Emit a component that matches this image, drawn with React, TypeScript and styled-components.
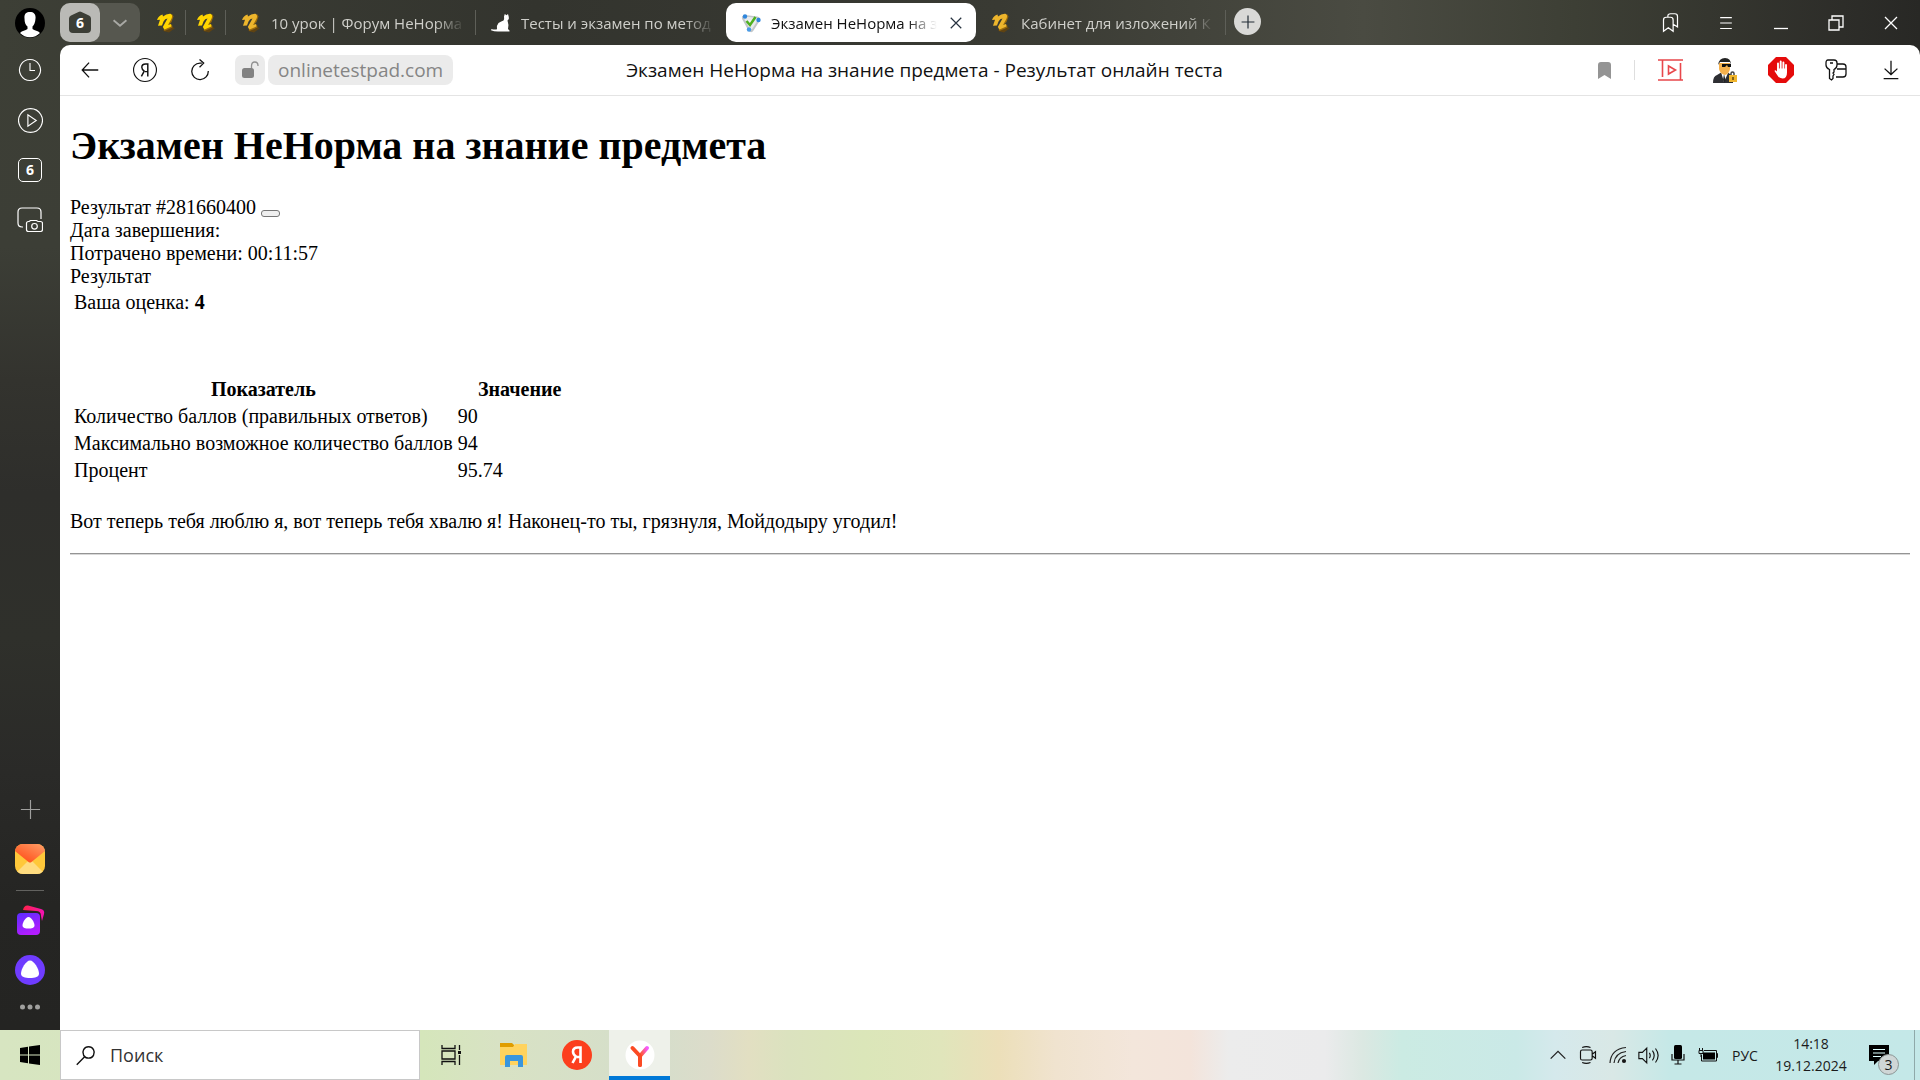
import React from "react";
import styled, { createGlobalStyle, css } from "styled-components";

const ui = `"Open Sans", "Noto Sans", sans-serif`;
const serif = `"Liberation Serif", "Times New Roman", serif`;

const GlobalStyle = createGlobalStyle`
  *, *::before, *::after { box-sizing: border-box; }
  body { margin: 0; background: #fff; font-family: ${ui}; }
  button { padding: 0; border: 0; background: none; color: inherit; font: inherit; }
  svg { display: block; flex: none; }
`;

const Desktop = styled.div`
  display: grid;
  grid-template-rows: minmax(0, 1fr) 50px;
  height: 100vh;
`;

const Browser = styled.div`
  display: grid;
  grid-template-columns: 60px minmax(0, 1fr);
  grid-template-rows: 45px minmax(0, 1fr);
  background:
    linear-gradient(90deg, #3d3f36 0, #33342e 28%, #393a33 52%, #4a4b42 71%, #3d3f35 82%, #2d2d29 96%, #282825 100%) top / 100% 60px no-repeat,
    linear-gradient(180deg, #3d3f36 0, #3c3e36 24%, #33332e 37%, #2e2e2b 48%, #2f302b 62%, #2a2a28 75%, #252523 88%, #242422 100%);
`;

const Corner = styled.div`
  display: flex;
  align-items: center;
  justify-content: center;
`;

const TabStrip = styled.header`
  display: flex;
  align-items: stretch;
  min-width: 0;
`;

const TabGroup = styled.div`
  display: flex;
  width: 80px;
  margin: 3px 6px 3px 0;
  border-radius: 10px;
  background: #56574f;
`;

const GroupButton = styled.button<{ $light?: boolean }>`
  display: flex;
  flex: 1;
  align-items: center;
  justify-content: center;
  border-radius: 10px;
  background: ${(p) => (p.$light ? "#babab6" : "transparent")};
`;

const HomeBadge = styled.span`
  display: grid;
  place-items: center;
  color: #fff;
  font-size: 14px;
  line-height: 24px;
  font-weight: 700;
  > * { grid-area: 1 / 1; }
`;

const Tab = styled.button<{ $active?: boolean; $pinned?: boolean; $rule?: boolean }>`
  position: relative;
  display: flex;
  align-items: center;
  flex: 0 1 ${(p) => (p.$pinned ? 40 : 250)}px;
  min-width: 0;
  gap: 10px;
  padding: ${(p) => (p.$pinned ? "0 10px" : "0 11px 0 15px")};
  color: ${(p) => (p.$active ? "#111" : "#cfcfca")};
  font-size: 15px;
  line-height: 24px;
  ${(p) => p.$active && css`
    margin: 3px 0;
    border-radius: 10px;
    background: #fff;
  `}
  ${(p) => p.$rule && css`
    &::after {
      content: "";
      position: absolute;
      right: 0;
      top: 10px;
      bottom: 10px;
      width: 1px;
      background: #5e5f58;
    }
  `}
`;

const TabTitle = styled.span`
  flex: 1;
  min-width: 0;
  overflow: hidden;
  text-align: left;
  white-space: nowrap;
  mask-image: linear-gradient(90deg, #000 calc(100% - 30px), transparent);
`;

const NewTab = styled.button`
  display: flex;
  align-items: center;
  justify-content: center;
  align-self: center;
  width: 27px;
  height: 27px;
  margin: 0 auto 2px 8px;
  border-radius: 50%;
  background: #d9d9d7;
`;

const Cluster = styled.div`
  display: flex;
  padding-right: 2px;
`;

const IconButton = styled.button<{ $narrow?: boolean }>`
  display: flex;
  align-items: center;
  justify-content: center;
  width: ${(p) => (p.$narrow ? 47 : 55)}px;
`;

const Sidebar = styled.nav`
  display: flex;
  flex-direction: column;
  align-items: center;
`;

const SideButton = styled.button<{ $push?: boolean }>`
  display: flex;
  align-items: center;
  justify-content: center;
  width: 60px;
  height: 50px;
  margin-top: ${(p) => (p.$push ? "auto" : "0")};
`;

const MoreButton = styled(SideButton)`
  height: 24px;
  margin-bottom: 11px;
`;

const Counter = styled.span`
  width: 24px;
  border: 1px solid #fff;
  border-radius: 5px;
  color: #fff;
  font-size: 14px;
  line-height: 22px;
  font-weight: 700;
`;

const SideRule = styled.hr`
  width: 28px;
  height: 1px;
  margin: 6px 0 4px;
  border: 0;
  background: #62625f;
`;

const Panel = styled.div`
  display: flex;
  flex-direction: column;
  min-width: 0;
  min-height: 0;
  border-radius: 10px 10px 0 0;
  background: #fff;
`;

const Toolbar = styled.div`
  display: flex;
  height: 51px;
  padding-left: 2px;
  border-bottom: 1px solid #e4e4e4;
`;

const LockButton = styled.button`
  display: flex;
  align-items: center;
  justify-content: center;
  align-self: center;
  width: 30px;
  height: 30px;
  margin: 0 3px 0 8px;
  border-radius: 7px;
  background: #ebebeb;
`;

const Omnibox = styled.div`
  display: grid;
  grid-template-columns: minmax(0, 1fr) auto minmax(0, 1fr);
  align-items: center;
  flex: 1;
  min-width: 0;
`;

const Host = styled.a`
  justify-self: start;
  padding: 0 10px;
  border-radius: 8px;
  background: #ebebeb;
  color: #858585;
  font-size: 19px;
  line-height: 30px;
  text-decoration: none;
`;

const PageTitle = styled.span`
  overflow: hidden;
  color: #111;
  font-size: 19px;
  line-height: 30px;
  white-space: nowrap;
`;

const ToolRule = styled.span`
  align-self: center;
  width: 1px;
  height: 20px;
  margin: 0 8px 0 6px;
  background: #dedede;
`;

const Page = styled.main`
  flex: 1;
  min-height: 0;
  overflow: hidden;
  padding: 0 10px;
  color: #000;
  font-family: ${serif};
  font-size: 20px;
  line-height: 23px;
`;

const Heading = styled.h1`
  margin: 27px 0;
  font-size: 40px;
  line-height: 46px;
`;

const EmptyButton = styled.button`
  width: 19px;
  height: 7px;
  border: 1px solid #767676;
  border-radius: 3px;
  background: #efefef;
  vertical-align: -2px;
`;

const Grid = styled.table`
  border-spacing: 3px 2px;
  td, th { padding: 1px; }
`;

const Scores = styled(Grid)`
  margin: 58px 0 25px;
  th:last-child { width: 126px; }
`;

const Rule = styled.hr`
  height: 2px;
  margin: 20px 0 0;
  border: 0;
  border-top: 1px solid #949494;
  border-bottom: 1px solid #d8d8d8;
`;

const Taskbar = styled.footer`
  display: flex;
  color: #1b1b1b;
  background: linear-gradient(90deg,
    #d7e5c1 0, #d5e6bb 22%, #d8e2c4 26%, #d5decb 34%, #dcdcca 37%, #e2dfc2 39%,
    #dbe2bf 41%, #dbe6b9 45%, #e0e5bb 49%, #ecdfb9 52%, #f0e3cf 55%, #f3e6db 59%,
    #f3e4db 62%, #ececec 64%, #ebebec 69%, #dbe8e2 71%, #cbebe3 73%, #cae9e7 79%,
    #d5e9ec 81%, #d9e8e6 84%, #c5e8e7 87%, #c4e8e8 100%);
`;

const TaskButton = styled.button<{ $active?: boolean; $wide?: boolean }>`
  display: flex;
  align-items: center;
  justify-content: center;
  width: ${(p) => (p.$wide ? 60 : 61)}px;
  margin-right: ${(p) => (p.$wide ? 0 : 2)}px;
  border-bottom: ${(p) => (p.$active ? "4px solid #0078d7" : "0")};
  background: ${(p) => (p.$active ? "#eef1ea" : "transparent")};
  ${(p) => p.$active && "padding-top: 4px;"}
`;

const Search = styled.label`
  display: flex;
  align-items: center;
  gap: 14px;
  width: 360px;
  padding: 0 14px;
  border: 1px solid #c8c8c8;
  background: #fff;
`;

const SearchInput = styled.input`
  flex: 1;
  min-width: 0;
  padding: 0;
  border: 0;
  outline: 0;
  background: none;
  color: #222;
  font: 18px/30px ${ui};
  &::placeholder { color: #333; opacity: 1; }
`;

const Tray = styled.div`
  display: flex;
  align-items: center;
  margin-left: auto;
`;

const TrayButton = styled.button`
  display: flex;
  align-items: center;
  justify-content: center;
  width: 30px;
  height: 50px;
`;

const Language = styled.button`
  width: 44px;
  font-size: 14px;
`;

const Clock = styled.time`
  width: 88px;
  font-size: 14px;
  line-height: 22px;
  text-align: center;
`;

const NoticeButton = styled.button`
  position: relative;
  width: 59px;
  height: 50px;
  padding-left: 14px;
`;

const NoticeCount = styled.span`
  position: absolute;
  left: 23px;
  top: 24px;
  width: 21px;
  border: 1px solid #8c9595;
  border-radius: 50%;
  background: #cfd6d6;
  font-size: 14px;
  line-height: 19px;
  text-align: center;
`;

const ShowDesktop = styled.button`
  align-self: stretch;
  width: 6px;
  border-left: 1px solid #8fa9a9;
`;

const Line = ({ size = 24, d, color = "#fff", w = 1.2 }: { size?: number; d: string; color?: string; w?: number }) => (
  <svg width={size} height={size} viewBox="0 0 24 24" fill="none" stroke={color} strokeWidth={w} aria-hidden="true">
    <path d={d} />
  </svg>
);

const NLogo = ({ muted }: { muted?: boolean }) => (
  <svg width="20" height="20" viewBox="0 0 20 20" aria-hidden="true">
    <path d="M7 18l5-5 7 2-6 4.500z" fill="#5f4312" />
    <path d="M16 1l1.500 2.500L15.500 9l-3 3.500 3.500-1 .5 3-8 3.500-1-2.500L13 5z" fill="#9a6a0c" />
    <path d="M1 7Q2.500 2.500 6.500 1.500L7 3.500Q10.500 .5 14.500 .8q2.500 1 1 5L12 12l3-1 .3 2.500L8.500 16.500 6.800 14 11.500 5.500Q9 5.500 7.500 8.500L6 12.500 2 12.800 4 6.800z" fill={muted ? "#edb52c" : "#ffd500"} />
  </svg>
);

const Cat = () => (
  <svg width="20" height="20" viewBox="0 0 20 20" fill="#fff" aria-hidden="true">
    <path d="M13 3.500l.8-2.500 1.700 1.200L17 1l.8 3q.7 2-1.300 3.500 1.500 4 .5 8.500l1.500 1.500v1H8.500q-5 .3-8.500-1.200l.5-1.300q3 1 5.500.2-1-3.200 1.500-6.200Q9.500 8.500 12.500 7.500q1-1 .5-4z" />
  </svg>
);

const TestPad = () => (
  <svg width="20" height="20" viewBox="0 0 20 20" aria-hidden="true">
    <path d="M4 5l12 1.500-6 9.500z" fill="#f2f4f5" stroke="#c3c7ca" strokeWidth="6" strokeLinejoin="round" />
    <path d="M4.500 5l11 1.500L10 15z" fill="#f2f4f5" stroke="#e8eaec" strokeWidth="3" strokeLinejoin="round" />
    <circle cx="4" cy="3.500" r="2.200" fill="#2f86dc" />
    <circle cx="17.500" cy="7" r="2.200" fill="#2f86dc" />
    <circle cx="8" cy="16.500" r="2.200" fill="#4a9be6" />
    <path d="M5.500 8l3.500 4 5.500-8" fill="none" stroke="#4eb01f" strokeWidth="2.500" />
  </svg>
);

const Avatar = () => (
  <svg width="30" height="30" viewBox="0 0 30 30" aria-hidden="true">
    <circle cx="15" cy="15" r="15" fill="#000" />
    <path d="M15 4c4 0 6 2.500 5.500 6.500-.2 4-1.500 6.500-3 8v2.500c2 1.500 5.500 1.500 7.500 4a14 14 0 0 1-20 0c2-2.500 5.500-2.500 7.500-4V18.500c-2-1.500-3-4-3-8C9 6 11 4 15 4z" fill="#fff" />
  </svg>
);

const Alice = () => (
  <svg width="30" height="30" viewBox="0 0 30 30" aria-hidden="true">
    <circle cx="15" cy="15" r="15" fill="#6f3cff" />
    <path d="M15 5.500c4 0 9 8.500 9 13 0 3.500-4 4.500-9 4.500s-9-1-9-4.500c0-4.500 5-13 9-13z" fill="#fff" />
  </svg>
);

const AliceCards = () => (
  <svg width="30" height="30" viewBox="0 0 30 30" aria-hidden="true">
    <defs>
      <linearGradient id="card" x2="0.400" y2="1"><stop stopColor="#5a2dff" /><stop offset="1" stopColor="#b31dff" /></linearGradient>
      <linearGradient id="cardBack"><stop stopColor="#ff2347" /><stop offset="1" stopColor="#f312b4" /></linearGradient>
    </defs>
    <path d="M8 5q1-5 5-4.500l13 3.500q4 1 3 5l-2 7-1-5q0-5-5-5z" fill="url(#cardBack)" />
    <rect x="2" y="8" width="23" height="22" rx="4" fill="url(#card)" />
    <path d="M13.500 12c3 0 6 5.500 6 8.500 0 2.500-3 3-6 3s-6-.5-6-3c0-3 3-8.500 6-8.500z" fill="#fff" />
  </svg>
);

const Mail = () => (
  <svg width="30" height="30" viewBox="0 0 30 30" aria-hidden="true">
    <defs>
      <linearGradient id="flap" x1="0.200" y1="1" x2="1" y2="0"><stop stopColor="#ff4b16" /><stop offset="1" stopColor="#ff9f68" /></linearGradient>
      <clipPath id="mailClip"><rect width="30" height="30" rx="8" /></clipPath>
    </defs>
    <g clipPath="url(#mailClip)">
      <rect width="30" height="30" fill="#ffc83a" />
      <path d="M0 30L15 15l15 15z" fill="#ffdc80" />
      <path d="M0 0h30v7L16.500 18q-1.500 1.200-3 0L0 7z" fill="url(#flap)" />
    </g>
  </svg>
);

const Incognito = () => (
  <svg width="25" height="25" viewBox="0 0 25 25" aria-hidden="true">
    <path d="M0 25q0-7 4-8l5-3h5l6 4v7z" fill="#2e2f33" />
    <path d="M8 14l3 10 4-9z" fill="#fff" />
    <path d="M11 16l-1 6 1.500 3 1-3z" fill="#222" />
    <path d="M6 5h11v6q-1 5-5 6-5-1-6-6z" fill="#f5b14d" />
    <path d="M5 7q1-7 7-7 6 0 6 7l-1-3H7z" fill="#222" />
    <path d="M9 6h9v3h-3l-1-2-2 2H9z" fill="#111" />
    <path d="M18 18v-2.500q0-1.500 1.500-1.500t1.500 1.500V18" fill="none" stroke="#444" strokeWidth="1.500" />
    <rect x="16" y="17" width="8" height="7" fill="#f0b52c" />
    <path d="M20 19v3" stroke="#60440a" strokeWidth="1.500" />
  </svg>
);

const StopHand = () => (
  <svg width="26" height="26" viewBox="0 0 26 26" aria-hidden="true">
    <path d="M8 0h10l8 8v10l-8 8H8l-8-8V8z" fill="#e50b0b" />
    <path d="M10 13V6.500M12.700 12V4.500M15.400 12V5.500M18 14V8" stroke="#fff" strokeWidth="1.900" strokeLinecap="round" />
    <path d="M9 11.500h10v4q0 6-4.500 6-3.500 0-5-3L6.500 14q.5-1.500 2.500.5z" fill="#fff" />
  </svg>
);

const Folder = () => (
  <svg width="28" height="24" viewBox="0 0 28 24" aria-hidden="true">
    <path d="M0 0h12l2 2v5H0z" fill="#e09d00" />
    <path d="M0 4h13l2-3h12v21H0z" fill="#ffd35e" />
    <path d="M5 24V14q0-2 2-2h14q2 0 2 2v10h-5v-6h-8v6z" fill="#3a96dd" />
  </svg>
);

const YaMark = ({ size, fill, ink, ring }: { size: number; fill: string; ink: string; ring?: string }) => (
  <svg width={size} height={size} viewBox="0 0 30 30" aria-hidden="true">
    <circle cx="15" cy="15" r="14.300" fill={fill} stroke={ring || fill} strokeWidth="1.400" />
    <path d="M18.500 23V7.500h-2.800c-3 0-4.700 1.500-4.700 4.200 0 2.200 1 3.300 3 4.800L10.500 23M18.500 17H15" fill="none" stroke={ink} strokeWidth={ring ? 1.800 : 2.600} />
  </svg>
);

const YBrowser = () => (
  <svg width="30" height="30" viewBox="0 0 30 30" aria-hidden="true">
    <defs>
      <linearGradient id="arm" x1="0" y1="1" x2="1" y2="0"><stop stopColor="#ff4a2a" /><stop offset="0.500" stopColor="#ff5a4d" /><stop offset="1" stopColor="#f45cff" /></linearGradient>
    </defs>
    <circle cx="15" cy="15" r="14.500" fill="#fff" />
    <path d="M15 25v-9l7-8" fill="none" stroke="url(#arm)" strokeWidth="4" strokeLinecap="round" strokeLinejoin="round" />
    <path d="M7.500 8l7.500 8v9" fill="none" stroke="#fb4a24" strokeWidth="4" strokeLinecap="round" strokeLinejoin="round" />
  </svg>
);

const scores = [
  ["Количество баллов (правильных ответов)", "90"],
  ["Максимально возможное количество баллов", "94"],
  ["Процент", "95.74"],
];

export default function App() {
  return (
    <Desktop>
      <GlobalStyle />
      <Browser>
        <Corner><Avatar /></Corner>
        <TabStrip>
          <TabGroup>
            <GroupButton $light aria-label="Группа вкладок">
              <HomeBadge>
                <svg width="22" height="23" viewBox="0 0 22 23" aria-hidden="true">
                  <path d="M9.500 1Q11 0 12.500 1L20 4.500q2 1 2 3V18q0 4-4 4H4q-4 0-4-4V7.500q0-2 2-3z" fill="#3c3e36" />
                </svg>
                <span>6</span>
              </HomeBadge>
            </GroupButton>
            <GroupButton aria-label="Список вкладок"><Line d="M5 9l7 6 7-6" size={22} color="#a9a9a5" w={2} /></GroupButton>
          </TabGroup>
          <Tab $pinned $rule aria-label="НеНорма"><NLogo /></Tab>
          <Tab $pinned $rule aria-label="НеНорма"><NLogo /></Tab>
          <Tab $rule><NLogo muted /><TabTitle>10 урок | Форум НеНорма</TabTitle></Tab>
          <Tab><Cat /><TabTitle>Тесты и экзамен по метод</TabTitle></Tab>
          <Tab $active>
            <TestPad /><TabTitle>Экзамен НеНорма на з</TabTitle>
            <Line d="M5 5l14 14M19 5L5 19" size={18} color="#26323f" w={1.600} />
          </Tab>
          <Tab $rule><NLogo muted /><TabTitle>Кабинет для изложений К</TabTitle></Tab>
          <NewTab aria-label="Новая вкладка"><Line d="M12 5v14M5 12h14" size={22} color="#222c36" w={1.300} /></NewTab>
          <Cluster>
            <IconButton aria-label="Закладки"><Line d="M4 22V9q0-3 3-3h5q3 0 3 3v13l-5.500-4zM9 6V4.500Q9 2 12 2h5q3 0 3 3v12l-5-3" size={21} w={1.400} /></IconButton>
            <IconButton aria-label="Меню"><Line d="M5 5.500h14M5 12h14M5 18.500h14" size={20} w={1.300} /></IconButton>
            <IconButton aria-label="Свернуть"><Line d="M5 17.500h14" w={1.300} /></IconButton>
            <IconButton aria-label="Восстановить"><Line d="M5 9h10v10H5zM8 9V5h11v11h-4" w={1.300} /></IconButton>
            <IconButton aria-label="Закрыть"><Line d="M6 6l12 12M18 6L6 18" w={1.300} /></IconButton>
          </Cluster>
        </TabStrip>
        <Sidebar aria-label="Боковая панель">
          <SideButton aria-label="История"><Line d="M12 1.500a10.500 10.500 0 1 0 .01 0M12 5v7.500h5" size={24} w={1.100} /></SideButton>
          <SideButton aria-label="Плеер"><Line d="M12 .6a11.400 11.400 0 1 0 .01 0M9.500 6.500v11l8-5.500z" size={25} w={1.100} /></SideButton>
          <SideButton aria-label="Вкладки"><Counter>6</Counter></SideButton>
          <SideButton aria-label="Скриншот">
            <svg width="26" height="26" viewBox="0 0 26 26" fill="none" stroke="#fff" strokeWidth="1.200" aria-hidden="true">
              <path d="M6 20H5q-4 0-4-4V5q0-4 4-4h15q4 0 4 4v7" />
              <path d="M12 14.500l1.500-1h6l1.500 1h2.500q2 0 2 2v6q0 2-2 2h-12q-2 0-2-2v-6q0-2 2-2z" />
              <circle cx="17.500" cy="19.300" r="2.800" />
            </svg>
          </SideButton>
          <SideButton $push aria-label="Добавить"><Line d="M12 2v20M2 12h20" size={23} color="#a0a09e" w={1.200} /></SideButton>
          <SideButton aria-label="Почта"><Mail /></SideButton>
          <SideRule />
          <SideButton aria-label="Нейросети"><AliceCards /></SideButton>
          <SideButton aria-label="Алиса"><Alice /></SideButton>
          <MoreButton aria-label="Ещё">
            <svg width="20" height="6" viewBox="0 0 20 6" fill="#a0a09e" aria-hidden="true">
              <circle cx="2.500" cy="3" r="2.500" /><circle cx="10" cy="3" r="2.500" /><circle cx="17.500" cy="3" r="2.500" />
            </svg>
          </MoreButton>
        </Sidebar>
        <Panel>
          <Toolbar>
            <IconButton aria-label="Назад"><Line d="M21 12H3.500M11 4l-7.500 8 7.500 8" size={22} color="#111" w={1.400} /></IconButton>
            <IconButton aria-label="Яндекс"><YaMark size={24} fill="#fff" ink="#111" ring="#111" /></IconButton>
            <IconButton aria-label="Обновить"><Line d="M14 4.500h-2a9 9 0 1 0 9 8.500M11.500 0.500l4.500 4-4.500 4.500" size={22} color="#111" w={1.400} /></IconButton>
            <LockButton aria-label="Соединение">
              <svg width="18" height="18" viewBox="0 0 18 18" aria-hidden="true">
                <rect x="1" y="7" width="12" height="10" rx="2.500" fill="#828282" />
                <path d="M10.500 7V5q0-4 3.300-4T17 5" fill="none" stroke="#909090" strokeWidth="1.300" />
              </svg>
            </LockButton>
            <Omnibox>
              <Host href="#">onlinetestpad.com</Host>
              <PageTitle>Экзамен НеНорма на знание предмета - Результат онлайн теста</PageTitle>
            </Omnibox>
            <IconButton $narrow aria-label="В закладки">
              <svg width="13" height="17" viewBox="0 0 13 17" aria-hidden="true"><path d="M0 17V3q0-3 3-3h7q3 0 3 3v14l-6.500-4z" fill="#949494" /></svg>
            </IconButton>
            <ToolRule />
            <Cluster>
              <IconButton aria-label="Видео">
                <svg width="26" height="22" viewBox="0 0 26 22" fill="none" stroke="#e8474b" strokeWidth="1.600" aria-hidden="true">
                  <path d="M0 1h25M0 21h25M4.500 1v17M22.500 4v17M10.500 7v8l7-4z" />
                </svg>
              </IconButton>
              <IconButton aria-label="Инкогнито"><Incognito /></IconButton>
              <IconButton aria-label="Блокировщик"><StopHand /></IconButton>
              <IconButton aria-label="Пароли">
                <svg width="22" height="22" viewBox="0 0 22 22" fill="none" stroke="#111" strokeWidth="1.300" aria-hidden="true">
                  <path d="M3 1h6q3 0 3 3v2q0 3-3 4.500V13l-1 1 1 1.500-1 1.500v2.500L6.500 21 4.500 19.500V10.500Q1 9 1 6V4q0-3 2-3zM5 4h3M12 5h6q3 0 3 3v7q0 3-3 3h-7M12 10h9" />
                </svg>
              </IconButton>
              <IconButton aria-label="Загрузки"><Line d="M12 2v15M5 10.500l7 6.500 7-6.500M4 21.500h16" size={22} color="#111" w={1.400} /></IconButton>
            </Cluster>
          </Toolbar>
          <Page>
            <Heading>Экзамен НеНорма на знание предмета</Heading>
            <div>Результат #281660400 <EmptyButton aria-label="Копировать" /></div>
            <div>Дата завершения:</div>
            <div>Потрачено времени: 00:11:57</div>
            <div>Результат</div>
            <Grid><tbody><tr><td>Ваша оценка: <b>4</b></td></tr></tbody></Grid>
            <Scores>
              <thead><tr><th scope="col">Показатель</th><th scope="col">Значение</th></tr></thead>
              <tbody>{scores.map(([k, v]) => <tr key={k}><td>{k}</td><td>{v}</td></tr>)}</tbody>
            </Scores>
            <div>Вот теперь тебя люблю я, вот теперь тебя хвалю я! Наконец-то ты, грязнуля, Мойдодыру угодил!</div>
            <Rule />
          </Page>
        </Panel>
      </Browser>
      <Taskbar>
        <TaskButton $wide aria-label="Пуск">
          <svg width="20" height="20" viewBox="0 0 20 20" aria-hidden="true"><path d="M0 3l8-1.200V9.500H0zM9 1.600L20 0v9.500H9zM0 10.500h8v7.700L0 17zM9 10.500h11V20L9 18.400z" /></svg>
        </TaskButton>
        <Search>
          <Line d="M15.500 2a6.500 6.500 0 1 0 .01 0M11 13.500L2 22.500" size={21} color="#111" w={1.600} />
          <SearchInput placeholder="Поиск" aria-label="Поиск" />
        </Search>
        <TaskButton aria-label="Представление задач">
          <svg width="20" height="20" viewBox="0 0 20 20" fill="none" stroke="#111" strokeWidth="1.300" aria-hidden="true">
            <path d="M1 0v3.500h13V0M1 6h13v8H1zM1 20v-3.500h13V20M18.500 0v5M18.500 10v10" /><path d="M17 7.500h3" strokeWidth="3" />
          </svg>
        </TaskButton>
        <TaskButton aria-label="Проводник"><Folder /></TaskButton>
        <TaskButton aria-label="Яндекс"><YaMark size={30} fill="#fc3f1d" ink="#fff" /></TaskButton>
        <TaskButton $active aria-label="Яндекс Браузер"><YBrowser /></TaskButton>
        <Tray>
          <TrayButton aria-label="Скрытые значки"><Line d="M4 16l8-8 8 8" color="#222" size={22} w={1.400} /></TrayButton>
          <TrayButton aria-label="Камера"><Line d="M5 6h10q2 0 2 2v8q0 2-2 2H5q-2 0-2-2V8q0-2 2-2zM17 11l4-3v8l-4-3M5 3q5-2 10 0M5 21q5 2 10 0" color="#111" size={20} w={1.400} /></TrayButton>
          <TrayButton aria-label="Сеть">
            <svg width="18" height="18" viewBox="0 0 18 18" fill="none" stroke="#222" strokeWidth="1.200" aria-hidden="true">
              <path d="M1 17Q2 3 17 1.500M5 17q1-10 12-11.500M9 17q1-6 8-7.500" /><circle cx="15" cy="15" r="1.500" fill="#111" />
            </svg>
          </TrayButton>
          <TrayButton aria-label="Звук"><Line d="M1 8.500h4l5-5v17l-5-5H1zM13 9q2 3 0 6M16.500 6.500q4 5.500 0 11M20 4q6 8 0 16" color="#111" size={21} w={1.300} /></TrayButton>
          <TrayButton aria-label="Микрофон">
            <svg width="14" height="20" viewBox="0 0 14 20" aria-hidden="true"><rect x="3" width="8" height="14" rx="1.500" /><path d="M1 9v6h12V9M7 15v4M3.500 19h7" fill="none" stroke="#111" strokeWidth="1.200" /></svg>
          </TrayButton>
          <TrayButton aria-label="Батарея">
            <svg width="20" height="14" viewBox="0 0 20 14" aria-hidden="true"><path d="M5 4.500h12v7H5z" fill="#000" /><path d="M6 2.500h12.500v10.500H3.500V7M18.500 5.500h1v4h-1M1.500 0v2M4.500 0v2M1 2.500h4v3H1zM3 5v4" fill="none" stroke="#111" strokeWidth="1" /></svg>
          </TrayButton>
          <Language>РУС</Language>
          <Clock>14:18<br />19.12.2024</Clock>
          <NoticeButton aria-label="Уведомления">
            <svg width="20" height="20" viewBox="0 0 20 20" aria-hidden="true"><path d="M0 0h20v16H9l-4 4v-4H0z" /><path d="M4 4.500h12M4 8h12M4 11.500h8" stroke="#dff" strokeWidth="1.200" /></svg>
            <NoticeCount>3</NoticeCount>
          </NoticeButton>
          <ShowDesktop aria-label="Свернуть все окна" />
        </Tray>
      </Taskbar>
    </Desktop>
  );
}
